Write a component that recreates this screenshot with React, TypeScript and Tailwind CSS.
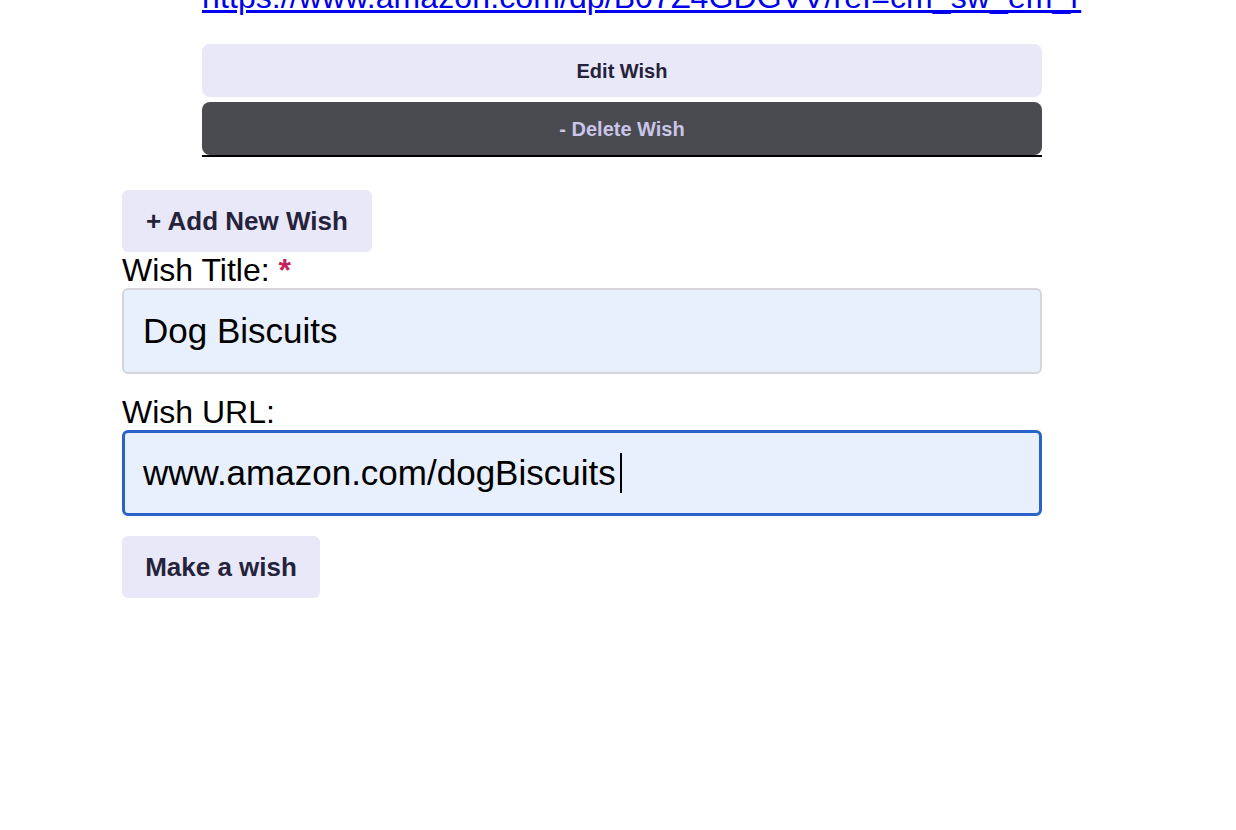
import React from "react";

export default function App() {
  return (
    <div className="min-h-[830px] w-[1236px] overflow-hidden bg-white font-['Liberation_Sans',Arial,Helvetica,sans-serif] text-black">
      <div className="ml-[122px] w-[920px] flex flex-col">
        <div className="ml-[80px] w-[840px] flex flex-col">
          <a
            href="#"
            className="-mt-[21px] block whitespace-nowrap text-[32px] leading-[36px] tracking-[0.1px] text-[#0000ee] underline"
          >
            https://www.amazon.com/dp/B07Z4GDGVV/ref=cm_sw_em_r
          </a>
          <div className="mt-[29px] flex flex-col gap-[5px] border-b-2 border-black">
            <button className="h-[53px] w-full rounded-[8px] bg-[#e9e8f8] text-[20px] font-bold text-[#25233b]">
              Edit Wish
            </button>
            <button className="h-[53px] w-full rounded-[8px] bg-[#4a4b51] text-[20px] font-bold text-[#c9c5e8]">
              - Delete Wish
            </button>
          </div>
        </div>

        <button className="mt-[33px] h-[62px] w-[250px] rounded-[6px] bg-[#e9e8f8] text-[26px] font-bold text-[#25233b]">
          + Add New Wish
        </button>

        <label className="text-[32px] leading-[36px]">
          Wish Title: <span className="font-bold text-[#c0245a]">*</span>
        </label>
        <div className="flex h-[86px] items-center rounded-[6px] border-2 border-[#d6d6da] bg-[#e8effd] pl-[19px] text-[35px]">
          Dog Biscuits
        </div>

        <label className="mt-[20px] text-[32px] leading-[36px]">Wish URL:</label>
        <div className="flex h-[86px] items-center rounded-[6px] border-[3px] border-[#2a62c9] bg-[#e8effd] pl-[18px] text-[35px]">
          <span>www.amazon.com/dogBiscuits</span>
          <span className="ml-[4px] inline-block h-[40px] w-[2px] bg-black" />
        </div>

        <button className="mt-[20px] h-[62px] w-[198px] rounded-[6px] bg-[#e9e8f8] text-[26px] font-bold text-[#25233b]">
          Make a wish
        </button>
      </div>
    </div>
  );
}
